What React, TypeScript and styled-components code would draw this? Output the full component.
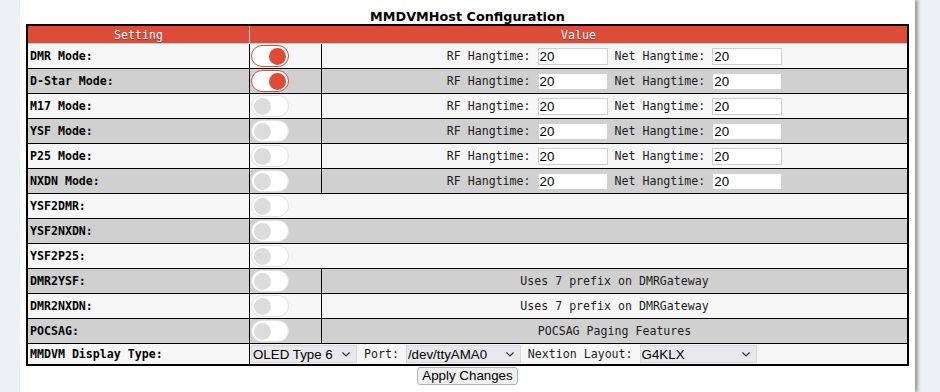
import styled, { createGlobalStyle } from "styled-components";

const GlobalStyle = createGlobalStyle`
  html, body {
    margin: 0;
    padding: 0;
    background: #edf0f5;
  }
  body {
    font-family: "DejaVu Sans Mono", "Liberation Mono", monospace;
  }
`;

type ModeRow = {
  label: string;
  on?: boolean;
  kind: "hang" | "span" | "note";
  note?: string;
};

const rows: ModeRow[] = [
  { label: "DMR Mode:", on: true, kind: "hang" },
  { label: "D-Star Mode:", on: true, kind: "hang" },
  { label: "M17 Mode:", kind: "hang" },
  { label: "YSF Mode:", kind: "hang" },
  { label: "P25 Mode:", kind: "hang" },
  { label: "NXDN Mode:", kind: "hang" },
  { label: "YSF2DMR:", kind: "span" },
  { label: "YSF2NXDN:", kind: "span" },
  { label: "YSF2P25:", kind: "span" },
  { label: "DMR2YSF:", kind: "note", note: "Uses 7 prefix on DMRGateway" },
  { label: "DMR2NXDN:", kind: "note", note: "Uses 7 prefix on DMRGateway" },
  { label: "POCSAG:", kind: "note", note: "POCSAG Paging Features" },
];

const Chevron = () => (
  <svg width="8" height="5" viewBox="0 0 8 5">
    <polyline points="0.5,0.5 4,4 7.5,0.5" fill="none" stroke="#333" strokeWidth="1.2" />
  </svg>
);

const Dropdown = ({ width, value }: { width: number; value: string }) => (
  <SelectWrap $w={width}>
    <Select defaultValue={value}>
      <option>{value}</option>
    </Select>
    <Arrow>
      <Chevron />
    </Arrow>
  </SelectWrap>
);

const Switch = ({ on }: { on?: boolean }) => (
  <Toggle $on={!!on}>
    <Knob $on={!!on} />
  </Toggle>
);

export default function App() {
  return (
    <>
      <GlobalStyle />
      <Page>
        <Title>MMDVMHost Configuration</Title>
        <Table>
          <colgroup>
            <col style={{ width: 222 }} />
            <col style={{ width: 72 }} />
            <col />
          </colgroup>
          <thead>
            <tr>
              <Head>Setting</Head>
              <Head colSpan={2}>Value</Head>
            </tr>
          </thead>
          <tbody>
            {rows.map((r) => (
              <Row key={r.label}>
                <Label>{r.label}</Label>
                {r.kind === "span" ? (
                  <SwitchCell colSpan={2}>
                    <Switch on={r.on} />
                  </SwitchCell>
                ) : (
                  <>
                    <SwitchCell>
                      <Switch on={r.on} />
                    </SwitchCell>
                    <ValueCell>
                      {r.kind === "hang" ? (
                        <>
                          RF Hangtime:{" "}
                          <NumInput defaultValue="20" />{" "}
                          Net Hangtime:{" "}
                          <NumInput defaultValue="20" />
                        </>
                      ) : (
                        r.note
                      )}
                    </ValueCell>
                  </>
                )}
              </Row>
            ))}
            <Row>
              <Label>MMDVM Display Type:</Label>
              <DisplayCell colSpan={2}>
                <Dropdown width={106} value="OLED Type 6" /> Port:{" "}
                <Dropdown width={115} value="/dev/ttyAMA0" /> Nextion Layout:{" "}
                <Dropdown width={117} value="G4KLX" />
              </DisplayCell>
            </Row>
          </tbody>
        </Table>
        <ApplyButton type="button">Apply Changes</ApplyButton>
      </Page>
    </>
  );
}

const Page = styled.div`
  width: 895px;
  height: 392px;
  margin-left: 20px;
  padding: 0 6px;
  box-sizing: border-box;
  background: #fff;
  box-shadow: 3px 0 3px rgba(0, 0, 0, 0.35);
`;

const Title = styled.h2`
  margin: 0;
  padding-top: 9px;
  height: 15px;
  font-family: "DejaVu Sans", Verdana, sans-serif;
  font-size: 12.8px;
  font-weight: bold;
  line-height: 15px;
  text-align: center;
  color: #000;
`;

const Table = styled.table`
  width: 883px;
  margin: 0 auto;
  table-layout: fixed;
  border: 2px solid #000;
  border-collapse: separate;
  border-spacing: 0;
  font-size: 11.6px;
  color: #000;
`;

const Head = styled.th`
  height: 17px;
  padding: 0;
  background: #dd4b39;
  color: #fff;
  font-weight: normal;
  text-align: center;
  text-shadow: 0 1px 1px rgba(0, 0, 0, 0.3);
  border-bottom: 1px solid #c9c9c9;
  &:first-child {
    border-right: 1px solid #c9c9c9;
  }
`;

const Row = styled.tr`
  &:nth-child(odd) {
    background: #f6f6f6;
  }
  &:nth-child(even) {
    background: #d0d0d0;
  }
  & > td {
    height: 24px;
    padding: 0;
    border-right: 1px solid #000;
    border-bottom: 1px solid #000;
    vertical-align: middle;
    line-height: 14px;
    white-space: nowrap;
  }
  & > td:last-child {
    border-right: none;
  }
  &:last-child > td {
    height: 20px;
    border-bottom: none;
  }
`;

const Label = styled.td`
  padding-left: 2px !important;
  font-weight: bold;
  text-align: left;
`;

const SwitchCell = styled.td`
  padding-left: 1px !important;
  text-align: left;
`;

const ValueCell = styled.td`
  text-align: center;
  color: #1c1c1c;
`;

const DisplayCell = styled.td`
  padding-left: 1px !important;
  text-align: left;
  color: #1c1c1c;
`;

const Toggle = styled.span<{ $on: boolean }>`
  display: flex;
  align-items: center;
  justify-content: ${(p) => (p.$on ? "flex-end" : "flex-start")};
  width: 38px;
  height: 22px;
  padding: 0 2px;
  box-sizing: border-box;
  border: 1px solid ${(p) => (p.$on ? "#dd4b39" : "#e2e2e2")};
  border-radius: 11px;
  background: #fff;
`;

const Knob = styled.span<{ $on: boolean }>`
  width: 17px;
  height: 17px;
  border-radius: 50%;
  background: ${(p) => (p.$on ? "#dd4b39" : "#dcdcdc")};
`;

const NumInput = styled.input`
  width: 70px;
  height: 17px;
  margin: 0;
  padding: 0 1px;
  box-sizing: border-box;
  border: 1px solid #cfcfcf;
  background: #fff;
  font-family: "Liberation Sans", Arial, sans-serif;
  font-size: 13.33px;
  color: #000;
  vertical-align: middle;
`;

const SelectWrap = styled.span<{ $w: number }>`
  position: relative;
  display: inline-block;
  width: ${(p) => p.$w}px;
  height: 18px;
  vertical-align: middle;
`;

const Select = styled.select`
  width: 100%;
  height: 18px;
  margin: 0;
  padding: 0 16px 0 1px;
  box-sizing: border-box;
  appearance: none;
  border: 1px solid #d8d8dc;
  border-radius: 0;
  background: #e9e9ed;
  font-family: "Liberation Sans", Arial, sans-serif;
  font-size: 13.33px;
  color: #000;
`;

const Arrow = styled.span`
  position: absolute;
  right: 7px;
  top: 7px;
  display: flex;
  pointer-events: none;
`;

const ApplyButton = styled.button`
  display: block;
  height: 18px;
  margin: 1px auto 0;
  padding: 0 4px;
  border: 1px solid #b3b3b3;
  border-radius: 3px;
  background: #efefef;
  font-family: "Liberation Sans", Arial, sans-serif;
  font-size: 13.33px;
  line-height: 14px;
  color: #000;
`;
